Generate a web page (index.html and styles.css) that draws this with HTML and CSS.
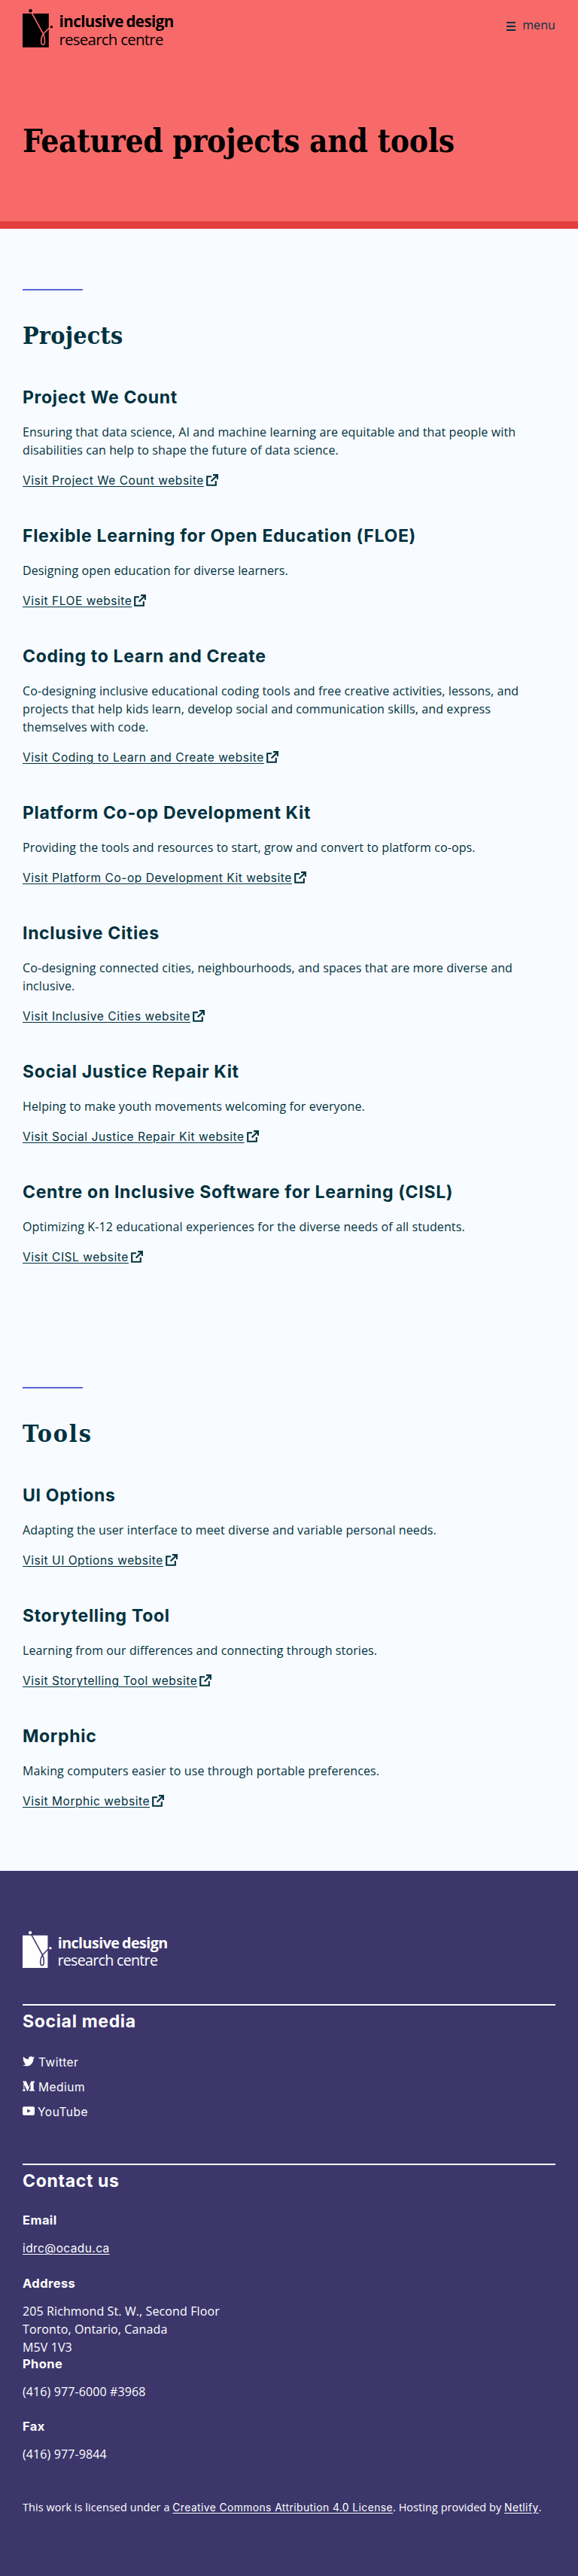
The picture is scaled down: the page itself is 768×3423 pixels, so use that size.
FILE: index.html
```html
<!DOCTYPE html>
<html lang="en">
<head>
<meta charset="utf-8">
<title>Featured projects and tools</title>
<link rel="stylesheet" href="styles.css">
</head>
<body>
<svg class="defs" aria-hidden="true">
  <symbol id="external" viewBox="0 0 16 16"><path d="M7 3.2H1.2V14.8H12.8V9M6.6 9.6L14 2.2M9 1.1H14.9V7" fill="none" stroke="currentColor" stroke-width="2.1"/></symbol>
</svg>
<header class="banner">
  <div class="topbar">
    <a class="logo"><svg width="201" height="51" viewBox="0 0 201 51">
      <rect y="6" width="34.8" height="45" fill="currentColor"/>
      <path class="stroke" d="M10.5 2L27.5 33C30 38 30.5 47.5 27 47.5C23.5 47.5 24 38 27.5 33L37 23.5"/>
      <circle cx="10.5" cy="2.2" r="2.2" fill="currentColor"/><circle cx="38.4" cy="23.7" r="1.8" fill="currentColor"/>
      <text class="bold" x="48.6" y="24" textLength="152.6">inclusive design</text>
      <text x="48.4" y="48" textLength="139">research centre</text>
    </svg></a>
    <a class="menu"><span class="bars"></span>menu</a>
  </div>
  <h1>Featured projects and tools</h1>
</header>
<main>
  <section>
    <h2>Projects</h2>
    <article><h3>Project We Count</h3><p>Ensuring that data science, AI and machine learning are equitable and that people with disabilities can help to shape the future of data science.</p><a class="visit"><span>Visit Project We Count website</span><svg><use href="#external"/></svg></a></article>
    <article><h3>Flexible Learning for Open Education (FLOE)</h3><p>Designing open education for diverse learners.</p><a class="visit"><span>Visit FLOE website</span><svg><use href="#external"/></svg></a></article>
    <article><h3>Coding to Learn and Create</h3><p>Co-designing inclusive educational coding tools and free creative activities, lessons, and projects that help kids learn, develop social and communication skills, and express themselves with code.</p><a class="visit"><span>Visit Coding to Learn and Create website</span><svg><use href="#external"/></svg></a></article>
    <article><h3>Platform Co-op Development Kit</h3><p>Providing the tools and resources to start, grow and convert to platform co-ops.</p><a class="visit"><span>Visit Platform Co-op Development Kit website</span><svg><use href="#external"/></svg></a></article>
    <article><h3>Inclusive Cities</h3><p>Co-designing connected cities, neighbourhoods, and spaces that are more diverse and inclusive.</p><a class="visit"><span>Visit Inclusive Cities website</span><svg><use href="#external"/></svg></a></article>
    <article><h3>Social Justice Repair Kit</h3><p>Helping to make youth movements welcoming for everyone.</p><a class="visit"><span>Visit Social Justice Repair Kit website</span><svg><use href="#external"/></svg></a></article>
    <article><h3>Centre on Inclusive Software for Learning (CISL)</h3><p>Optimizing K-12 educational experiences for the diverse needs of all students.</p><a class="visit"><span>Visit CISL website</span><svg><use href="#external"/></svg></a></article>
  </section>
  <section class="tools">
    <h2>Tools</h2>
    <article><h3>UI Options</h3><p>Adapting the user interface to meet diverse and variable personal needs.</p><a class="visit"><span>Visit UI Options website</span><svg><use href="#external"/></svg></a></article>
    <article><h3>Storytelling Tool</h3><p>Learning from our differences and connecting through stories.</p><a class="visit"><span>Visit Storytelling Tool website</span><svg><use href="#external"/></svg></a></article>
    <article><h3>Morphic</h3><p>Making computers easier to use through portable preferences.</p><a class="visit"><span>Visit Morphic website</span><svg><use href="#external"/></svg></a></article>
  </section>
</main>
<footer>
  <a class="logo"><svg width="193" height="49" viewBox="0 0 201 51">
    <rect y="6" width="34.8" height="45" fill="currentColor"/>
    <path class="stroke" d="M10.5 2L27.5 33C30 38 30.5 47.5 27 47.5C23.5 47.5 24 38 27.5 33L37 23.5"/>
    <circle cx="10.5" cy="2.2" r="2.2" fill="currentColor"/><circle cx="38.4" cy="23.7" r="1.8" fill="currentColor"/>
    <text class="bold" x="48.6" y="24" textLength="152.6">inclusive design</text>
    <text x="48.4" y="48" textLength="139">research centre</text>
  </svg></a>
  <section class="social">
    <h3>Social media</h3>
    <ul>
      <li><svg viewBox="0 0 512 512"><path fill="currentColor" d="M459.37 151.716c.325 4.548.325 9.097.325 13.645 0 138.72-105.583 298.558-298.558 298.558-59.452 0-114.68-17.219-161.137-47.106 8.447.974 16.568 1.299 25.34 1.299 49.055 0 94.213-16.568 130.274-44.832-46.132-.975-84.792-31.188-98.112-72.772 6.498.974 12.995 1.624 19.818 1.624 9.421 0 18.843-1.3 27.614-3.573-48.081-9.747-84.143-51.98-84.143-102.985v-1.299c13.969 7.797 30.214 12.67 47.431 13.319-28.264-18.843-46.781-51.005-46.781-87.391 0-19.492 5.197-37.36 14.294-52.954 51.655 63.675 129.3 105.258 216.365 109.807-1.624-7.797-2.599-15.918-2.599-24.04 0-57.828 46.782-104.934 104.934-104.934 30.213 0 57.502 12.67 76.67 33.137 23.715-4.548 46.456-13.32 66.599-25.34-7.798 24.366-24.366 44.833-46.132 57.827 21.117-2.273 41.584-8.122 60.426-16.243-14.292 20.791-32.161 39.308-52.628 54.253z"/></svg><span>Twitter</span></li>
      <li><svg viewBox="0 0 16 16"><path fill="currentColor" d="M0 1.5h4.8L8.3 9.6 11.4 1.5H16v1L14.6 3.8V12.3L16 13.6v.9H9v-.9l1.6-1.3V5.2L7 14.5H6.2L2.4 6v6L4 13.6v.9H0v-.9L1.4 12V4z"/></svg><span>Medium</span></li>
      <li class="tight"><svg viewBox="0 0 16 16"><path fill="currentColor" fill-rule="evenodd" d="M2 2.2h12q2 0 2 2v7.6q0 2-2 2H2q-2 0-2-2V4.2q0-2 2-2zM6.2 5.4v5.2l4.6-2.6z"/></svg><span>YouTube</span></li>
    </ul>
  </section>
  <section class="contact">
    <h3>Contact us</h3>
    <h4>Email</h4>
    <p><a class="link">idrc@ocadu.ca</a></p>
    <h4>Address</h4>
    <p class="address">205 Richmond St. W., Second Floor<br>Toronto, Ontario, Canada<br>M5V 1V3</p>
    <h4>Phone</h4>
    <p>(416) 977-6000 #3968</p>
    <h4>Fax</h4>
    <p>(416) 977-9844</p>
  </section>
  <p class="license">This work is licensed under a <a class="link">Creative Commons Attribution 4.0 License</a>. Hosting provided by <a class="link">Netlify</a>.</p>
</footer>
</body>
</html>
```
FILE: styles.css
```css
* { box-sizing: border-box; margin: 0; padding: 0; }
body { font: 16px/24px "Open Sans", sans-serif; letter-spacing: 0.11px; color: #003240; background: #f8fbff; }
.defs { display: none; }
.banner { height: 304px; padding: 12px 30px 0; background: #f86a6a; border-bottom: 10px solid #e53e3e; color: #000; }
.topbar { display: flex; justify-content: space-between; }
.logo svg { display: block; overflow: visible; }
.logo text { font: 20.5px "Open Sans", sans-serif; letter-spacing: 0; fill: currentColor; }
.logo .bold { font-weight: 700; word-spacing: -1px; }
.logo .stroke { fill: none; stroke: #f86a6a; stroke-width: 1.6; }
.menu { display: flex; gap: 9px; margin-top: 9px; height: 24px; color: #003240; }
.bars { width: 12px; height: 12px; margin-top: 8px; background: repeating-linear-gradient(currentColor 0 2px, transparent 2px 5px); }
h1 { margin-top: 100px; font: bold 42px/50px "DejaVu Serif Condensed", "DejaVu Serif", serif; font-stretch: condensed; letter-spacing: -0.25px; white-space: nowrap; }
main > section { padding: 80px 30px 81px; }
main > section::before { content: ""; display: block; width: 80px; height: 2px; margin-bottom: 40px; background: #5a67d8; }
h2 { font: bold 32px/40px "DejaVu Serif Condensed", "DejaVu Serif", serif; font-stretch: condensed; letter-spacing: 0.2px; }
.tools h2 { letter-spacing: 1.9px; }
h3 { font: 700 23px/32px Inter, sans-serif; letter-spacing: 0.67px; }
article { padding-top: 46px; }
article h3 { margin-bottom: 18px; }
article p { max-width: 690px; margin-bottom: 16px; }
.visit { display: flex; height: 24px; padding-top: 1px; gap: 3px; font: 15.5px/24px Inter, sans-serif; letter-spacing: 0.54px; }
.visit span, .link { text-decoration: underline; text-decoration-thickness: 1px; text-underline-offset: 2px; }
.visit svg { width: 16px; height: 16px; margin-top: 3px; }
footer { height: 937px; padding: 80px 30px 0; background: #3c366b; color: #fff; }
footer .logo .stroke { stroke: #3c366b; }
footer section { border-top: 2px solid #fff; padding-top: 5px; }
.social { height: 212px; margin-top: 48px; }
.social ul { list-style: none; margin-top: 27px; }
.social li { display: flex; gap: 5px; height: 33px; font: 15.5px/24px Inter, sans-serif; letter-spacing: 0.5px; }
.social .tight { gap: 4px; }
.social svg { width: 16px; height: 16px; margin-top: 2px; }
h4 { font: 700 16.5px/24px Inter, sans-serif; letter-spacing: 0.4px; margin-bottom: 13px; }
.contact h3 { margin-bottom: 24px; }
.contact p { margin-bottom: 22px; }
.contact .address { margin-bottom: -2px; }
.link { font-family: Inter, sans-serif; font-size: 15.5px; letter-spacing: 0.4px; }
.license { margin-top: 47px; font-size: 14.4px; letter-spacing: 0.09px; white-space: nowrap; }
.license .link { font-size: 13.8px; letter-spacing: 0.44px; }
```
